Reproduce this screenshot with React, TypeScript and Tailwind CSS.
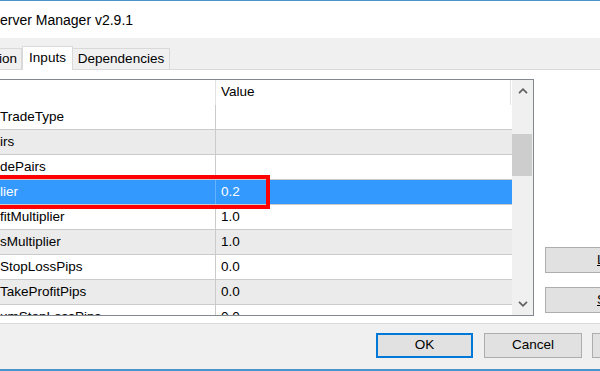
import React from "react";

type Row = { n: string; v: string; sel?: boolean };

const rows: Row[] = [
  { n: "TradeType", v: "" },
  { n: "irs", v: "" },
  { n: "dePairs", v: "" },
  { n: "lier", v: "0.2", sel: true },
  { n: "fitMultiplier", v: "1.0" },
  { n: "sMultiplier", v: "1.0" },
  { n: "StopLossPips", v: "0.0" },
  { n: "TakeProfitPips", v: "0.0" },
  { n: "umStopLossPips", v: "0.0" },
];

function Chevron({ down }: { down?: boolean }) {
  return (
    <svg width="10" height="6" viewBox="0 0 10 6" className={down ? "rotate-180" : ""}>
      <path d="M1 5.2 L5 1.2 L9 5.2" fill="none" stroke="#606060" strokeWidth="1.7" />
    </svg>
  );
}

export default function App() {
  return (
    <div className="w-[600px] h-[371px] overflow-hidden bg-[#f0f0f0] flex flex-col font-['Liberation_Sans',Arial,sans-serif] text-black">
      <div className="h-px bg-[#4a94cc] shrink-0" />
      <div className="h-[37px] bg-white flex items-center pt-[2px] text-[14px] shrink-0 whitespace-nowrap">
        erver Manager v2.9.1
      </div>
      <div className="h-[32px] border-b border-[#d9d9d9] flex items-end shrink-0 text-[13.5px]">
        <div className="-ml-[12px] w-[34px] h-[21px] border border-b-0 border-[#d9d9d9] bg-[#f0f0f0] flex items-center pl-[10px] pt-px">
          ion
        </div>
        <div className="w-[51px] h-[24px] -mb-px bg-white border border-b-0 border-[#d9d9d9] flex items-center justify-center relative">
          Inputs
        </div>
        <div className="w-[97px] h-[21px] border border-l-0 border-b-0 border-[#d9d9d9] bg-[#f0f0f0] flex items-center justify-center pt-px">
          Dependencies
        </div>
      </div>
      <div className="h-[254px] bg-white border-b border-[#d9d9d9] flex pt-[9px] shrink-0">
        <div className="-ml-px w-[535px] h-[237px] border border-[#828790] relative flex shrink-0 text-[13.5px]">
          <div className="w-[512px] flex flex-col overflow-hidden">
            <div className="h-[25px] flex shrink-0">
              <div className="w-[216px] border-r border-[#e3e3e3]" />
              <div className="w-[295px] border-r border-[#e3e3e3] pl-[5px] flex items-center">Value</div>
            </div>
            {rows.map((r, i) => (
              <div
                key={i}
                className={
                  "h-[25px] border-b border-[#cbcbcb] flex shrink-0 whitespace-nowrap " +
                  (r.sel ? "bg-[#3399ff] text-white" : i % 2 === 1 ? "bg-[#ebebeb]" : "bg-white")
                }
              >
                <div
                  className={
                    "w-[216px] border-r flex items-center overflow-hidden " +
                    (r.sel ? "border-[#66b2ff]" : "border-[#cbcbcb]")
                  }
                >
                  {r.n}
                </div>
                <div className="flex-1 pl-[5px] flex items-center">{r.v}</div>
              </div>
            ))}
          </div>
          <div className="w-[21px] bg-[#f0f0f0] flex flex-col">
            <div className="h-[21px] flex items-center justify-center">
              <Chevron />
            </div>
            <div className="mt-[33px] h-[42px] w-[20px] bg-[#cdcdcd]" />
            <div className="flex-1" />
            <div className="h-[21px] flex items-center justify-center pb-[2px]">
              <Chevron down />
            </div>
          </div>
          <div className="absolute top-[95px] left-[-12px] w-[282px] h-[34px] border-4 border-[#ff0000]" />
        </div>
        <div className="ml-[11px] flex flex-col justify-end gap-[14px] pb-[10px] text-[13.5px]">
          <div className="w-[75px] h-[26px] bg-[#e1e1e1] border border-[#adadad] pl-[51px] flex items-center whitespace-nowrap">
            <span className="underline">L</span>oad
          </div>
          <div className="w-[75px] h-[26px] bg-[#e1e1e1] border border-[#adadad] pl-[51px] flex items-center whitespace-nowrap">
            <span className="underline">S</span>ave
          </div>
        </div>
      </div>
      <div className="h-[45px] flex items-start pt-[9px] pl-[376px] shrink-0 text-[13.5px]">
        <div className="w-[97px] h-[25px] shrink-0 border-2 border-[#0078d7] bg-[#e1e1e1] flex items-center justify-center">
          OK
        </div>
        <div className="ml-[11px] w-[98px] h-[25px] shrink-0 border border-[#adadad] bg-[#e1e1e1] flex items-center justify-center">
          Cancel
        </div>
        <div className="ml-[10px] w-[98px] h-[25px] shrink-0 border border-[#adadad] bg-[#e1e1e1] flex items-center justify-center">
          Apply
        </div>
      </div>
      <div className="h-[2px] bg-[#4a94cc] shrink-0" />
    </div>
  );
}
